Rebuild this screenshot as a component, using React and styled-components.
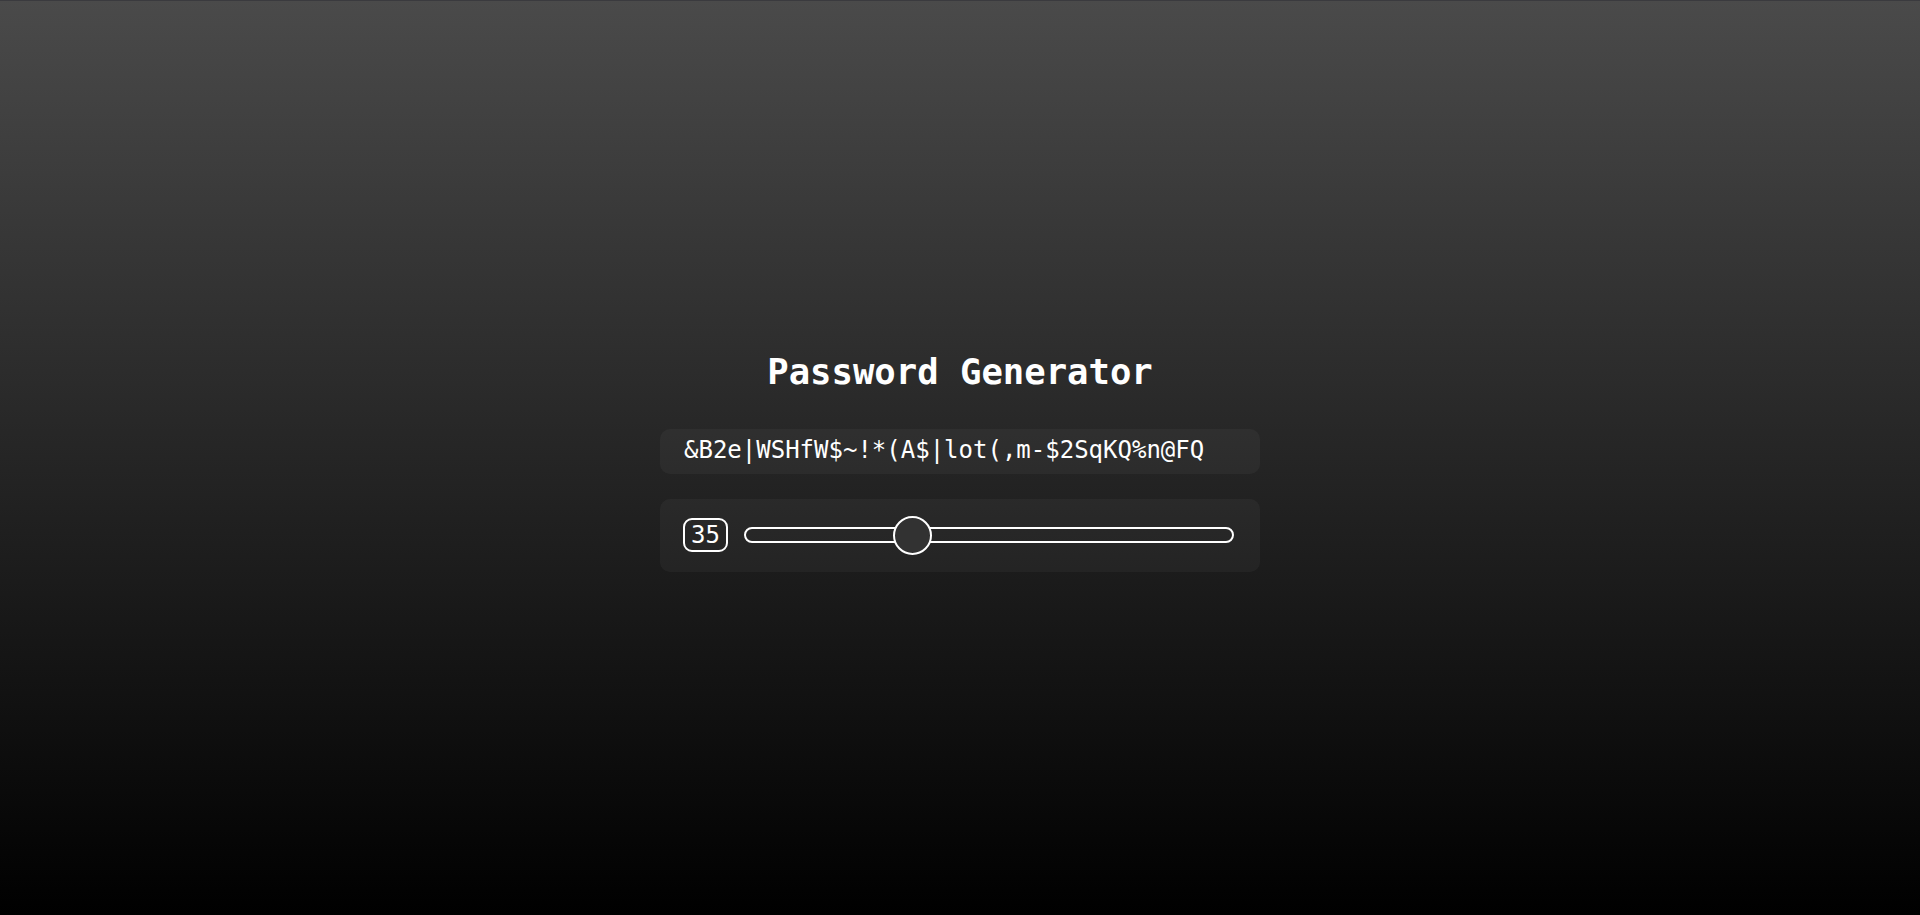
import React from "react";
import styled, { createGlobalStyle } from "styled-components";

const GlobalStyle = createGlobalStyle`
  * {
    box-sizing: border-box;
  }

  html,
  body {
    margin: 0;
    padding: 0;
  }

  body {
    font-family: "DejaVu Sans Mono", "Liberation Mono", monospace;
    color: #fff;
    background: linear-gradient(#3a3a3e 0 1px, transparent 1px),
      linear-gradient(180deg, #4a4a4a 0%, #000 100%);
    min-height: 100vh;
  }
`;

const Page = styled.main`
  min-height: 100vh;
  padding-top: 7px;
  display: flex;
  align-items: center;
  justify-content: center;
`;

const Wrapper = styled.section`
  width: 600px;
  display: flex;
  flex-direction: column;
`;

const Title = styled.h1`
  margin: 0 0 37px;
  font-size: 35.6px;
  font-weight: 700;
  line-height: normal;
  text-align: center;
`;

const Card = styled.div`
  background-color: rgba(255, 255, 255, 0.04);
  border-radius: 10px;
  display: flex;
  align-items: center;
`;

const PasswordBox = styled(Card)`
  height: 45px;
  padding: 0 24px 3px;
  font-size: 24px;
  white-space: nowrap;
  overflow: hidden;
`;

const SliderCard = styled(Card)`
  margin-top: 25px;
  height: 73px;
  padding: 0 26px 0 23px;
  gap: 16px;
`;

const LengthBadge = styled.span`
  flex: none;
  height: 34px;
  padding: 0 6px;
  border: 2px solid #fff;
  border-radius: 9px;
  font-size: 24px;
  line-height: 30px;
`;

const Track = styled.div`
  position: relative;
  flex: 1;
  height: 16px;
  border: 2px solid #fff;
  border-radius: 8px;
`;

const Thumb = styled.div`
  position: absolute;
  top: 50%;
  width: 39px;
  height: 39px;
  margin-top: -19.5px;
  border: 2px solid #fff;
  border-radius: 50%;
  background-color: #323232;
`;

const password = "&B2e|WSHfW$~!*(A$|lot(,m-$2SqKQ%n@FQ";
const length = 35;
const min = 8;
const max = 90;

function Slider({ value }) {
  const ratio = (value - min) / (max - min);
  return (
    <Track>
      <Thumb style={{ left: `calc(${ratio} * (100% - 39px))` }} />
    </Track>
  );
}

export default function App() {
  return (
    <>
      <GlobalStyle />
      <Page>
        <Wrapper>
          <Title>Password Generator</Title>
          <PasswordBox>{password}</PasswordBox>
          <SliderCard>
            <LengthBadge>{length}</LengthBadge>
            <Slider value={length} />
          </SliderCard>
        </Wrapper>
      </Page>
    </>
  );
}
